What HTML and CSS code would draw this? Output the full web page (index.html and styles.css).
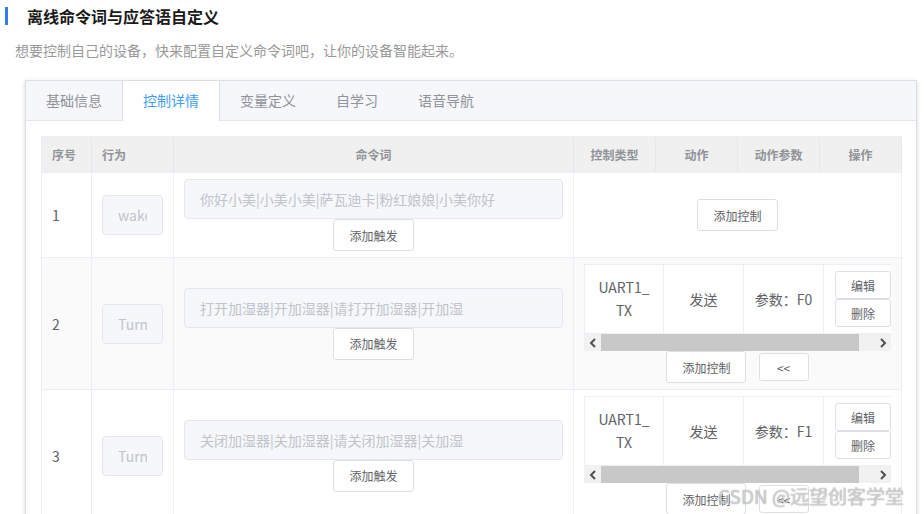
FILE: index.html
```html
<!DOCTYPE html>
<html lang="zh-CN">
<head>
    <meta charset="UTF-8">
    <meta name="viewport" content="width=device-width, initial-scale=1">
    <title>离线命令词与应答语自定义</title>
    <link rel="stylesheet" href="styles.css">
</head>
<body>
    <div class="head">
        <h2 class="title">离线命令词与应答语自定义</h2>
        <p class="desc">想要控制自己的设备，快来配置自定义命令词吧，让你的设备智能起来。</p>
    </div>

    <div class="card">
        <div class="tabs">
            <div class="tab">基础信息</div>
            <div class="tab active">控制详情</div>
            <div class="tab">变量定义</div>
            <div class="tab">自学习</div>
            <div class="tab">语音导航</div>
        </div>

        <div class="card-body">
            <table class="grid">
                <colgroup>
                    <col style="width:50px">
                    <col style="width:82px">
                    <col style="width:400px">
                    <col style="width:82px">
                    <col style="width:82px">
                    <col style="width:82px">
                    <col style="width:82px">
                </colgroup>
                <thead>
                    <tr>
                        <th class="left">序号</th>
                        <th class="left">行为</th>
                        <th>命令词</th>
                        <th>控制类型</th>
                        <th>动作</th>
                        <th>动作参数</th>
                        <th>操作</th>
                    </tr>
                </thead>
                <tbody>
                    <tr>
                        <td>1</td>
                        <td><input class="in" readonly value="wake up"></td>
                        <td>
                            <input class="in" readonly value="你好小美|小美小美|萨瓦迪卡|粉红娘娘|小美你好">
                            <div class="center"><button class="btn">添加触发</button></div>
                        </td>
                        <td colspan="4" class="center"><button class="btn">添加控制</button></td>
                    </tr>

                    <tr class="striped">
                        <td>2</td>
                        <td><input class="in" readonly value="Turn on the humidifier"></td>
                        <td>
                            <input class="in" readonly value="打开加湿器|开加湿器|请打开加湿器|开加湿">
                            <div class="center"><button class="btn">添加触发</button></div>
                        </td>
                        <td colspan="4">
                            <div class="scroll">
                                <div class="sub">
                                    <div class="sub-cell">UART1_<br>TX</div>
                                    <div class="sub-cell">发送</div>
                                    <div class="sub-cell">参数：F0</div>
                                    <div class="sub-cell ops">
                                        <button class="btn mini">编辑</button>
                                        <button class="btn mini">删除</button>
                                    </div>
                                </div>
                            </div>
                            <div class="bar">
                                <span class="arrow"><svg width="8" height="10" viewBox="0 0 8 10"><polyline points="6,1 2,5 6,9" fill="none" stroke="#505050" stroke-width="2"/></svg></span>
                                <span class="thumb"></span>
                                <span class="track"></span>
                                <span class="arrow"><svg width="8" height="10" viewBox="0 0 8 10"><polyline points="2,1 6,5 2,9" fill="none" stroke="#505050" stroke-width="2"/></svg></span>
                            </div>
                            <div class="center actions">
                                <button class="btn">添加控制</button>
                                <button class="btn back">&lt;&lt;</button>
                            </div>
                        </td>
                    </tr>

                    <tr>
                        <td>3</td>
                        <td><input class="in" readonly value="Turn off the humidifier"></td>
                        <td>
                            <input class="in" readonly value="关闭加湿器|关加湿器|请关闭加湿器|关加湿">
                            <div class="center"><button class="btn">添加触发</button></div>
                        </td>
                        <td colspan="4">
                            <div class="scroll">
                                <div class="sub">
                                    <div class="sub-cell">UART1_<br>TX</div>
                                    <div class="sub-cell">发送</div>
                                    <div class="sub-cell">参数：F1</div>
                                    <div class="sub-cell ops">
                                        <button class="btn mini">编辑</button>
                                        <button class="btn mini">删除</button>
                                    </div>
                                </div>
                            </div>
                            <div class="bar">
                                <span class="arrow"><svg width="8" height="10" viewBox="0 0 8 10"><polyline points="6,1 2,5 6,9" fill="none" stroke="#505050" stroke-width="2"/></svg></span>
                                <span class="thumb"></span>
                                <span class="track"></span>
                                <span class="arrow"><svg width="8" height="10" viewBox="0 0 8 10"><polyline points="2,1 6,5 2,9" fill="none" stroke="#505050" stroke-width="2"/></svg></span>
                            </div>
                            <div class="center actions">
                                <button class="btn">添加控制</button>
                                <button class="btn back">&lt;&lt;</button>
                            </div>
                        </td>
                    </tr>
                </tbody>
            </table>
        </div>
    </div>

    <div class="watermark">CSDN @远望创客学堂</div>
</body>
</html>
```

FILE: styles.css
```css
*{
    margin: 0;
    padding: 0;
    box-sizing: border-box;
}

body{
    font-family: "Noto Sans CJK SC", "Noto Sans", sans-serif;
    color: #606266;
    background-color: #fff;
    overflow: hidden;
    height: 514px;
}

.head{
    padding: 7px 0 0 5px;
}

.title{
    font-size: 16px;
    font-weight: bold;
    color: #1a1a1a;
    line-height: 18px;
    border-left: 3px solid #2f7cf6;
    padding-left: 19px;
}

.desc{
    margin: 15px 0 0 10px;
    font-size: 14px;
    line-height: 20px;
    color: #999;
}

.card{
    margin: 20px 7px 0 25px;
    border: 1px solid #dcdfe6;
    background-color: #fff;
    box-shadow: 0 2px 4px 0 rgba(0,0,0,.12), 0 0 6px 0 rgba(0,0,0,.04);
}

.tabs{
    display: flex;
    height: 40px;
    background-color: #f5f7fa;
    border-bottom: 1px solid #e4e7ed;
}

.tab{
    padding: 0 20px;
    height: 40px;
    line-height: 39px;
    font-size: 14px;
    color: #909399;
}

.tab.active{
    color: #409eff;
    background-color: #fff;
    border-left: 1px solid #dcdfe6;
    border-right: 1px solid #dcdfe6;
}

.card-body{
    padding: 15px;
}

.grid{
    width: 860px;
    table-layout: fixed;
    border-collapse: collapse;
    border: 1px solid #ebeef5;
}

.grid th{
    height: 36px;
    background-color: #f0f0f0;
    color: #909399;
    font-size: 12px;
    font-weight: bold;
    text-align: center;
    border-right: 1px solid #e8e8ec;
    border-bottom: 1px solid #ebeef5;
}

.grid th.left{
    text-align: left;
    padding-left: 10px;
}

.grid td{
    padding: 6px 10px;
    font-size: 14px;
    vertical-align: middle;
    border-right: 1px solid #ebeef5;
    border-bottom: 1px solid #ebeef5;
}

.grid tr.striped td{
    background-color: #fafafa;
}

.center{
    text-align: center;
}

.in{
    display: block;
    width: 100%;
    height: 40px;
    padding: 0 15px;
    font-family: inherit;
    font-size: 14px;
    color: #c0c4cc;
    background-color: #f5f7fa;
    border: 1px solid #e4e7ed;
    border-radius: 4px;
    outline: none;
}

.btn{
    display: inline-block;
    height: 32px;
    padding: 0 15px;
    font-family: inherit;
    font-size: 12px;
    color: #606266;
    background-color: #fff;
    border: 1px solid #dcdfe6;
    border-radius: 3px;
}

.btn.mini{
    height: 28px;
    width: 56px;
    padding: 0;
}

.btn.back{
    height: 28px;
    width: 50px;
    padding: 0;
    margin-left: 9px;
    vertical-align: middle;
}

.actions .btn{
    vertical-align: middle;
}

.scroll{
    width: 307px;
    overflow: hidden;
}

.sub{
    display: flex;
    width: 324px;
    border-top: 1px solid #ebeef5;
    border-left: 1px solid #ebeef5;
}

.sub-cell{
    flex: none;
    width: 80px;
    height: 69px;
    display: flex;
    align-items: center;
    justify-content: center;
    text-align: center;
    line-height: 23px;
    font-size: 14px;
    background-color: #fff;
    border-right: 1px solid #ebeef5;
    border-bottom: 1px solid #ebeef5;
}

.sub-cell:first-child{
    width: 79px;
}

.sub-cell.ops{
    width: 84px;
    flex-direction: column;
    align-items: flex-start;
    justify-content: center;
    padding-left: 11px;
}

.bar{
    display: flex;
    width: 307px;
    height: 17px;
    background-color: #f1f1f1;
}

.bar .arrow{
    width: 17px;
    display: flex;
    align-items: center;
    justify-content: center;
}

.bar .thumb{
    width: 258px;
    background-color: #c8c8c8;
}

.bar .track{
    flex: 1;
}

.watermark{
    position: absolute;
    left: 718px;
    top: 483px;
    font-size: 19px;
    line-height: 26px;
    color: rgba(255,255,255,.6);
    text-shadow: 0 0 1px #777;
    white-space: nowrap;
}
```
